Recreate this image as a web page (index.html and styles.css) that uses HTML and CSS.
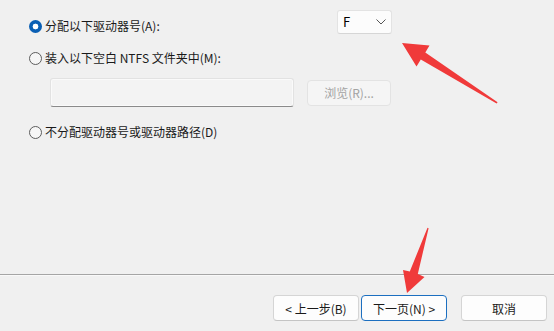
FILE: index.html
```html
<!DOCTYPE html>
<html lang="zh-CN">
<head>
<meta charset="utf-8">
<link rel="stylesheet" href="styles.css">
</head>
<body>
<div class="page">
  <div class="options">
    <div class="row row-first">
      <label class="opt"><span class="radio radio-on"></span><span>分配以下驱动器号(A):</span></label>
      <div class="select"><span>F</span>
        <svg class="chev" width="10" height="6" viewBox="0 0 10 6"><path d="M0.5 0.5 L5 5 L9.5 0.5" fill="none" stroke="#555" stroke-width="1"/></svg>
      </div>
    </div>
    <div class="row row-second">
      <label class="opt"><span class="radio"></span><span>装入以下空白 NTFS 文件夹中(M):</span></label>
    </div>
    <div class="folder">
      <div class="textbox"></div>
      <div class="btn-browse">浏览(R)...</div>
    </div>
    <div class="row row-third">
      <label class="opt"><span class="radio"></span><span>不分配驱动器号或驱动器路径(D)</span></label>
    </div>
  </div>
  <div class="sep"></div>
  <div class="footer">
    <button class="btn">&lt; 上一步(B)</button>
    <button class="btn btn-primary">下一页(N) &gt;</button>
    <button class="btn btn-cancel">取消</button>
  </div>
  <svg class="arrows" width="554" height="331" viewBox="0 0 554 331">
    <polygon fill="#f03a3a" points="402,43 429.5,45.5 425.3,52.4 497.6,102.2 496.6,103.6 420.8,59.6 416.5,66.5"/>
    <polygon fill="#f03a3a" points="407,293 403,270 409.8,271.4 427.5,227.8 428.6,228.2 417.8,274 424.5,277"/>
  </svg>
</div>
</body>
</html>
```

FILE: styles.css
```css
* { box-sizing: border-box; }
html, body { margin: 0; padding: 0; }
body {
  background: #f0f0f0;
  font-family: "Noto Sans CJK SC", "Noto Sans", sans-serif;
  font-size: 12px;
  color: #1a1a1a;
}
.page {
  position: relative;
  width: 554px;
  height: 331px;
  display: flex;
  flex-direction: column;
  overflow: hidden;
}
.options {
  flex: 1;
  padding: 10px 0 0 29px;
}
.row { display: flex; line-height: 16px; }
.row-first {
  width: 363px;
  justify-content: space-between;
  align-items: flex-end;
}
.row-second { margin-top: 16px; }
.row-third { margin-top: 17px; }
.opt { display: flex; align-items: center; gap: 3px; height: 16px; }
.radio {
  width: 13px;
  height: 13px;
  border-radius: 50%;
  border: 1px solid #5d5d5d;
  background: #f6f6f6;
  flex: none;
}
.radio-on {
  border: none;
  background: radial-gradient(circle, #ffffff 0 2.6px, #0a5fb4 3.2px);
}
.select {
  width: 55px;
  height: 24px;
  background: #fcfcfc;
  border: 1px solid #e3e3e3;
  border-bottom-color: #d6d6d6;
  border-radius: 3px;
  display: flex;
  align-items: center;
  justify-content: space-between;
  padding: 0 4px 0 5px;
  font-size: 13px;
  color: #000;
}
.chev { margin-right: 1px; }
.folder {
  display: flex;
  align-items: center;
  gap: 13px;
  margin: 12px 0 0 21px;
}
.textbox {
  width: 244px;
  height: 29px;
  background: #f3f3f3;
  border: 1px solid #e2e2e2;
  border-bottom: 1px solid #8a8a8a;
  border-radius: 3px;
  box-shadow: inset 0 0 0 1px #fafafa;
}
.btn-browse {
  width: 84px;
  height: 26px;
  border: 1px solid #e3e3e3;
  border-radius: 4px;
  background: #f5f5f5;
  color: #a3a3a3;
  display: flex;
  align-items: center;
  justify-content: center;
}
.sep {
  height: 2px;
  border-top: 1px solid #a5a5a5;
  border-bottom: 1px solid #f9f9f9;
}
.footer {
  display: flex;
  justify-content: flex-end;
  gap: 2px;
  padding: 19px 7px 10px 0;
}
.btn {
  width: 86px;
  height: 26px;
  background: #fdfdfd;
  border: 1px solid #d5d5d5;
  border-bottom-color: #c4c4c4;
  border-radius: 4px;
  font-family: inherit;
  font-size: 12px;
  color: #1a1a1a;
  padding: 0;
}
.btn-primary { border: 1px solid #1c6fc0; }
.btn-cancel { margin-left: 12px; }
.arrows {
  position: absolute;
  left: 0;
  top: 0;
  pointer-events: none;
}
```
